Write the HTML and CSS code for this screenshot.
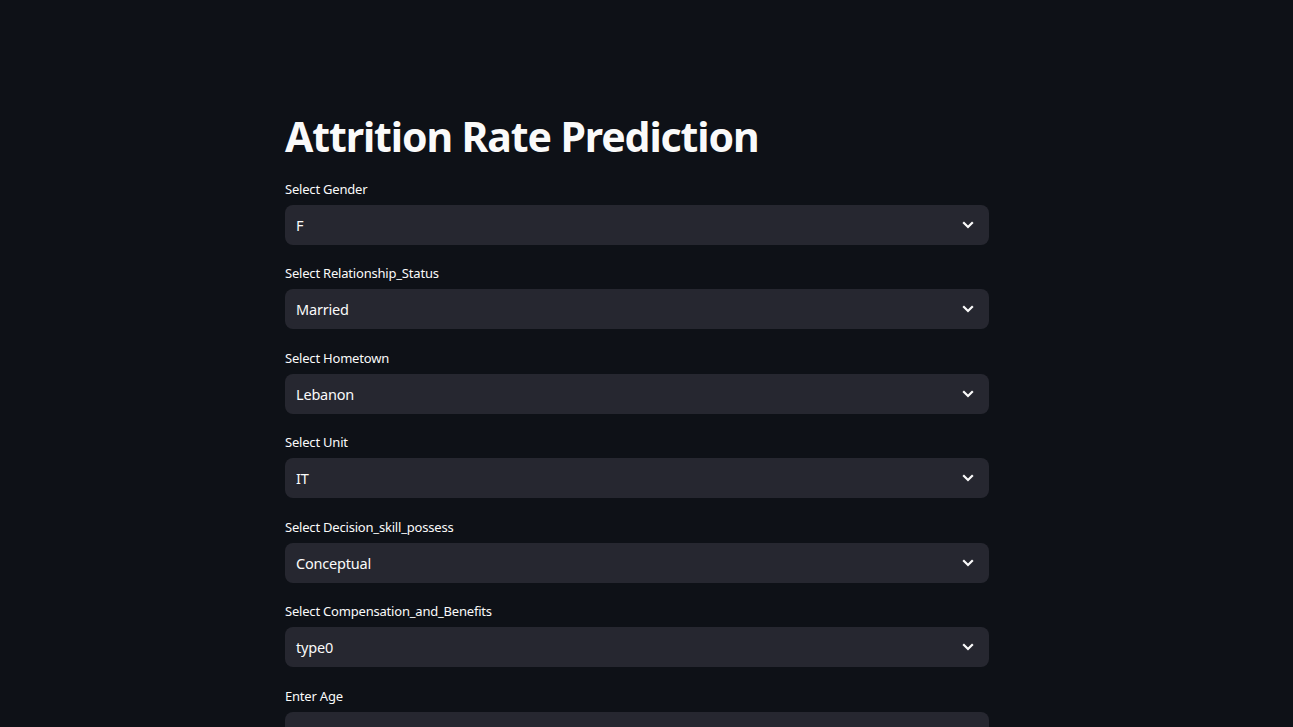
FILE: index.html
```html
<!DOCTYPE html>
<html lang="en">
<head>
<meta charset="utf-8">
<title>Attrition Rate Prediction</title>
<link rel="stylesheet" href="styles.css">
</head>
<body>
<div class="app">
  <main class="block">
    <h1 class="title">Attrition Rate Prediction</h1>
    <div class="widget">
      <label class="label">Select Gender</label>
      <div class="select"><span class="value">F</span><svg class="chev" viewBox="0 0 12 8" width="12" height="8"><path d="M1.2 1.2 L6 6 L10.8 1.2" fill="none" stroke="#fafafa" stroke-width="2.2"/></svg></div>
    </div>
    <div class="widget">
      <label class="label">Select Relationship_Status</label>
      <div class="select"><span class="value">Married</span><svg class="chev" viewBox="0 0 12 8" width="12" height="8"><path d="M1.2 1.2 L6 6 L10.8 1.2" fill="none" stroke="#fafafa" stroke-width="2.2"/></svg></div>
    </div>
    <div class="widget">
      <label class="label">Select Hometown</label>
      <div class="select"><span class="value">Lebanon</span><svg class="chev" viewBox="0 0 12 8" width="12" height="8"><path d="M1.2 1.2 L6 6 L10.8 1.2" fill="none" stroke="#fafafa" stroke-width="2.2"/></svg></div>
    </div>
    <div class="widget">
      <label class="label">Select Unit</label>
      <div class="select"><span class="value">IT</span><svg class="chev" viewBox="0 0 12 8" width="12" height="8"><path d="M1.2 1.2 L6 6 L10.8 1.2" fill="none" stroke="#fafafa" stroke-width="2.2"/></svg></div>
    </div>
    <div class="widget">
      <label class="label">Select Decision_skill_possess</label>
      <div class="select"><span class="value">Conceptual</span><svg class="chev" viewBox="0 0 12 8" width="12" height="8"><path d="M1.2 1.2 L6 6 L10.8 1.2" fill="none" stroke="#fafafa" stroke-width="2.2"/></svg></div>
    </div>
    <div class="widget">
      <label class="label">Select Compensation_and_Benefits</label>
      <div class="select"><span class="value">type0</span><svg class="chev" viewBox="0 0 12 8" width="12" height="8"><path d="M1.2 1.2 L6 6 L10.8 1.2" fill="none" stroke="#fafafa" stroke-width="2.2"/></svg></div>
    </div>
    <div class="widget">
      <label class="label">Enter Age</label>
      <div class="select"><span class="value">18.00</span></div>
    </div>
  </main>
</div>
</body>
</html>
```
FILE: styles.css
```css
html, body {
  margin: 0;
  padding: 0;
  background: #0e1117;
  height: 100%;
  overflow: hidden;
}
body {
  font-family: "Noto Sans", "Liberation Sans", sans-serif;
  color: #fafafa;
}
.app {
  padding-right: 19px;
  display: flex;
  justify-content: center;
}
.block {
  width: 704px;
  padding-top: 109px;
  display: flex;
  flex-direction: column;
  gap: 16.5px;
}
.title {
  margin: 0;
  font-size: 41px;
  font-weight: 700;
  line-height: 54px;
  letter-spacing: -1.1px;
  margin-bottom: -3px;
}
.widget {
  display: flex;
  flex-direction: column;
}
.label {
  font-size: 13px;
  line-height: 24px;
  height: 24px;
  margin-bottom: 4px;
  letter-spacing: -0.2px;
}
.select {
  height: 40px;
  background: #262730;
  border-radius: 8px;
  display: flex;
  align-items: center;
  justify-content: space-between;
  padding: 0 15px 0 11px;
}
.value {
  font-size: 14.5px;
  letter-spacing: -0.2px;
}
.chev {
  display: block;
}
```
